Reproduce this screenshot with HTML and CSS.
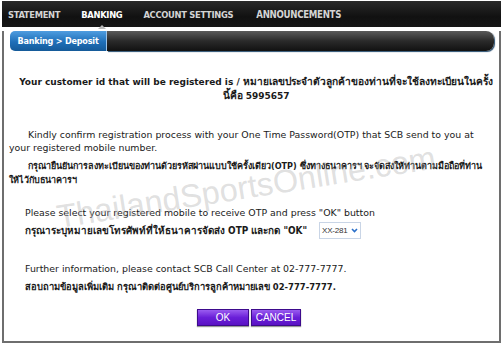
FILE: index.html
```html
<!DOCTYPE html>
<html>
<head>
<meta charset="utf-8">
<link rel="stylesheet" href="styles.css">
</head>
<body>
<div class="topnav">
  <span class="tab">STATEMENT</span>
  <span class="tab active">BANKING</span>
  <span class="tab">ACCOUNT SETTINGS</span>
  <span class="tab">ANNOUNCEMENTS</span>
</div>
<div class="panel">
  <div class="crumbbar">
    <div class="crumb">Banking &gt; Deposit</div>
    <div class="crumbrest"></div>
  </div>
  <div class="content">
    <h1 class="heading">Your customer id that will be registered is / <span class="th">หมายเลขประจำตัวลูกค้าของท่านที่จะใช้ลงทะเบียนในครั้ง</span><br><span class="th">นี้คือ</span> 5995657</h1>
    <p class="para indent confirm">Kindly confirm registration process with your One Time Password(OTP) that SCB send to you at<br>your registered mobile number.</p>
    <p class="para indent thai confirm-th">กรุณายืนยันการลงทะเบียนของท่านด้วยรหัสผ่านแบบใช้ครั้งเดียว(OTP) ซึ่งทางธนาคารฯ จะจัดส่งให้ท่านตามมือถือที่ท่าน<br>ให้ไว้กับธนาคารฯ</p>
    <div class="inset">
      <p class="para select-intro">Please select your registered mobile to receive OTP and press "OK" button</p>
      <div class="para row thai"><span>กรุณาระบุหมายเลขโทรศัพท์ที่ให้ธนาคารจัดส่ง OTP และกด "OK"</span>
        <span class="select">XX-281 <svg width="7" height="5" viewBox="0 0 7 5"><path d="M1 1 L3.5 3.5 L6 1" fill="none" stroke="#2a6fc9" stroke-width="1.6"/></svg></span>
      </div>
      <p class="para further">Further information, please contact SCB Call Center at 02-777-7777.</p>
      <p class="para thai further-th">สอบถามข้อมูลเพิ่มเติม กรุณาติดต่อศูนย์บริการลูกค้าหมายเลข 02-777-7777.</p>
    </div>
    <div class="buttons">
      <span class="btn ok">OK</span>
      <span class="btn cancel">CANCEL</span>
    </div>
    <div class="watermark">ThailandSportsOnline.com</div>
  </div>
</div>
</body>
</html>
```
FILE: styles.css
```css
html, body { margin: 0; padding: 0; background: #fff; }
body {
  width: 504px;
  height: 343px;
  overflow: hidden;
  font-family: "DejaVu Sans", "Noto Sans", sans-serif;
  color: #1a1a1a;
}
.topnav {
  margin: 1px 3px 0 2px;
  height: 26px;
  background: linear-gradient(#2a2a2a, #111 60%, #161616);
  display: flex;
  align-items: center;
  padding-left: 6px;
  position: relative;
}
.tab {
  color: #d4d4d4;
  font-family: "DejaVu Sans Condensed", "DejaVu Sans", sans-serif;
  font-weight: bold;
  font-size: 9.3px;
  letter-spacing: -0.3px;
  margin-right: 21px;
  position: relative;
}
.tab:nth-child(3) { margin-right: 23px; }
.tab:last-child { font-size: 9.6px; }
.tab.active { color: #fff; }
.tab.active::after {
  content: "";
  position: absolute;
  left: 50%;
  bottom: -9px;
  margin-left: -4px;
  border-left: 4px solid transparent;
  border-right: 4px solid transparent;
  border-bottom: 4px solid #bbb;
}
.panel {
  margin: 0 3px 0 2px;
  height: 310px;
  border: 2px solid #6e6e6e;
  border-top: none;
  position: relative;
}
.crumbbar {
  display: flex;
  margin: 4px 5px 0 6px;
  height: 20px;
}
.crumb {
  width: 96px;
  background: linear-gradient(#4f9de0, #1f6fb8 55%, #155a99);
  color: #fff;
  font-family: "DejaVu Sans Condensed", "DejaVu Sans", sans-serif;
  font-weight: bold;
  font-size: 9px;
  letter-spacing: -0.2px;
  border-radius: 5px 0 0 5px;
  display: flex;
  align-items: center;
  justify-content: center;
  border-right: 1px solid #9cc4ea;
}
.crumbrest {
  flex: 1;
  background: linear-gradient(#5a5a5a, #2a2a2a 50%, #111);
  border-radius: 0 8px 8px 0;
  box-shadow: 1px 1px 1px #2a4f70;
}
.content {
  position: relative;
  padding: 0 0 0 5px;
  font-size: 9.4px;
}
.heading {
  margin: 24px 0 0 4px;
  font-size: 9px;
  font-weight: bold;
  text-align: center;
  line-height: 13px;
  white-space: nowrap;
}
.heading .th { font-size: 10.2px; }
.para { margin: 0; line-height: 13px; }
.indent { text-indent: 19px; }
.confirm { margin-top: 25px; white-space: nowrap; }
.thai {
  font-family: "DejaVu Sans Condensed", "DejaVu Sans", sans-serif;
  font-weight: bold;
  font-size: 9.4px;
}
.confirm-th { margin-top: 5px; line-height: 14px; font-size: 9px; white-space: nowrap; }
.inset { padding-left: 16px; }
.select-intro { margin-top: 19px; }
.row { margin-top: 3px; display: flex; align-items: center; font-size: 9.9px; }
.select {
  margin-left: 12px;
  display: inline-flex;
  align-items: center;
  gap: 3px;
  height: 15px;
  padding: 0 2px 0 2px;
  border: 1px solid #c9d5e6;
  font-family: "Liberation Sans", sans-serif;
  font-size: 8px;
  letter-spacing: -0.2px;
  font-weight: normal;
  color: #333;
}
.further { margin-top: 23px; }
.further-th { margin-top: 5px; }
.buttons {
  margin-top: 16px;
  display: flex;
  justify-content: center;
  gap: 2px;
  padding-right: 10px;
}
.btn {
  height: 15px;
  display: flex;
  align-items: center;
  justify-content: center;
  background: linear-gradient(#9a5cf0, #6a1fd8 50%, #5a12c4);
  border: 1px solid #3d0a8c;
  color: #fff;
  font-family: "Liberation Sans", sans-serif;
  font-size: 10px;
  box-shadow: 0 1px 1px #999;
}
.ok { width: 50px; }
.cancel { width: 48px; }
.watermark {
  position: absolute;
  left: 56px;
  top: 124px;
  font-family: "Liberation Sans", sans-serif;
  font-size: 32.5px;
  color: rgba(175, 175, 175, 0.4);
  transform: rotate(-9deg);
  transform-origin: left bottom;
  white-space: nowrap;
  pointer-events: none;
}
```
